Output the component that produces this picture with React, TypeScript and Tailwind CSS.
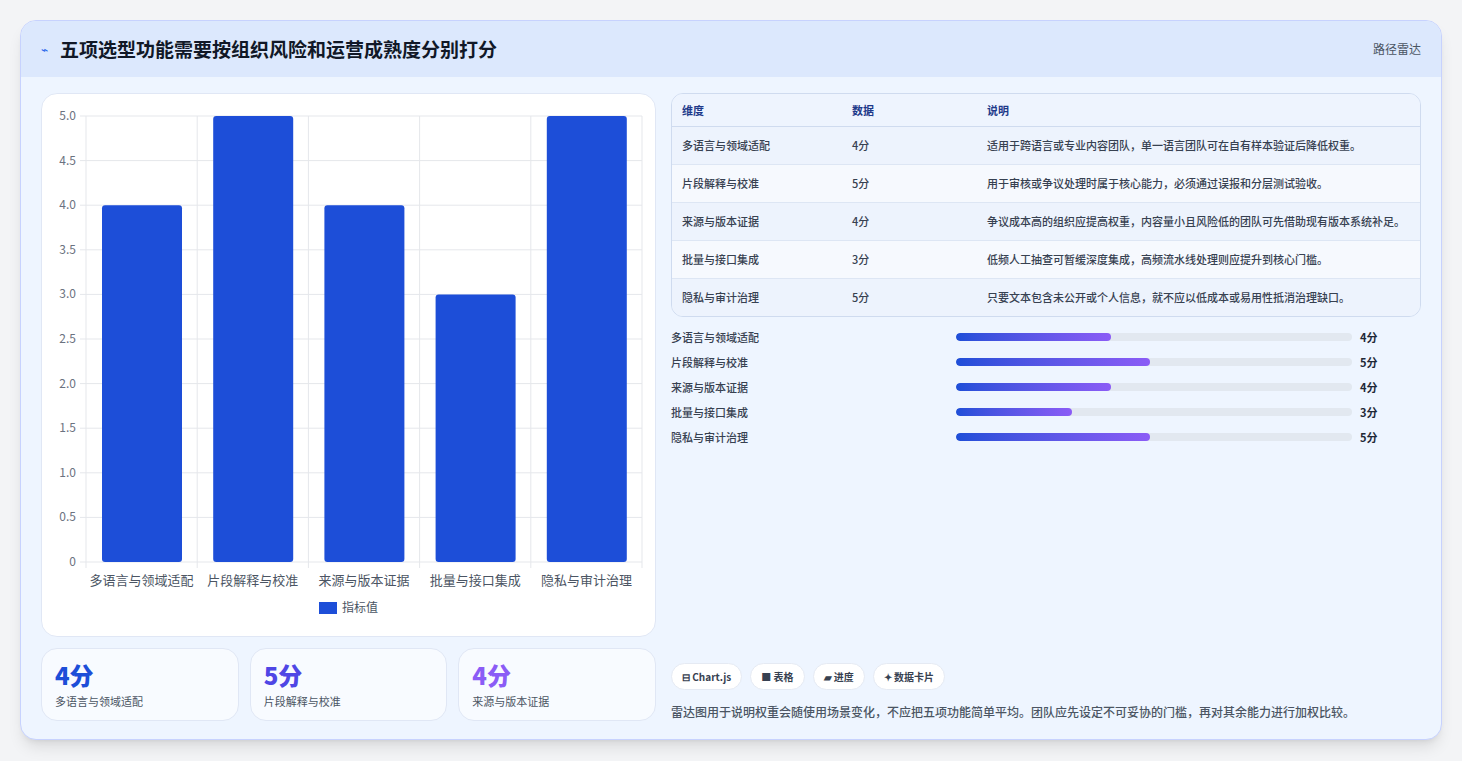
import React from 'react';

const rows = [
  { name: '多语言与领域适配', score: 4, note: '适用于跨语言或专业内容团队，单一语言团队可在自有样本验证后降低权重。' },
  { name: '片段解释与校准', score: 5, note: '用于审核或争议处理时属于核心能力，必须通过误报和分层测试验收。' },
  { name: '来源与版本证据', score: 4, note: '争议成本高的组织应提高权重，内容量小且风险低的团队可先借助现有版本系统补足。' },
  { name: '批量与接口集成', score: 3, note: '低频人工抽查可暂缓深度集成，高频流水线处理则应提升到核心门槛。' },
  { name: '隐私与审计治理', score: 5, note: '只要文本包含未公开或个人信息，就不应以低成本或易用性抵消治理缺口。' },
];

const font = { fontFamily: '"Noto Sans CJK SC", "Noto Sans", sans-serif' };

function BarChart() {
  const x0 = 44, x1 = 600, y0 = 22, y1 = 468;
  const h = y1 - y0;
  const cw = (x1 - x0) / 5;
  const ticks = [0, 0.5, 1, 1.5, 2, 2.5, 3, 3.5, 4, 4.5, 5];
  return (
    <svg width="615" height="544" className="block" style={font}>
      {ticks.map((t) => {
        const y = y1 - (t / 5) * h;
        return (
          <g key={t}>
            <line x1={x0 - 6} x2={x1} y1={y} y2={y} stroke="#e5e7eb" />
            <text x={x0 - 10} y={y + 4} textAnchor="end" fontSize="12" fill="#6b7280">
              {t === 0 ? '0' : t.toFixed(1)}
            </text>
          </g>
        );
      })}
      {[0, 1, 2, 3, 4, 5].map((i) => (
        <line key={i} x1={x0 + i * cw} x2={x0 + i * cw} y1={y0} y2={y1 + 6} stroke="#e5e7eb" />
      ))}
      {rows.map((r, i) => {
        const bh = (r.score / 5) * h;
        return (
          <g key={r.name}>
            <rect x={x0 + i * cw + 16} y={y1 - bh} width={80} height={bh} rx="3" fill="#1d4ed8" />
            <text x={x0 + i * cw + cw / 2} y={y1 + 23} textAnchor="middle" fontSize="13" fill="#4b5563">
              {r.name}
            </text>
          </g>
        );
      })}
      <rect x="277" y="508" width="18" height="12" fill="#1d4ed8" />
      <text x="300" y="518" fontSize="12" fill="#4b5563">指标值</text>
    </svg>
  );
}

export default function App() {
  return (
    <div className="min-h-[761px] bg-[#f3f4f6] pt-5 px-5" style={font}>
      <div className="w-[1422px] h-[720px] rounded-2xl border border-[#c7d2fe] bg-[#eef5ff] shadow-lg overflow-hidden flex flex-col">
        <div className="h-[56px] bg-[#dce8fd] flex items-center justify-between px-5 shrink-0">
          <div className="flex items-center gap-3">
            <span className="text-[#2563eb] text-xs">⌁</span>
            <h1 className="text-[19px] font-bold text-[#111827]">五项选型功能需要按组织风险和运营成熟度分别打分</h1>
          </div>
          <span className="text-xs text-[#4b5563]">路径雷达</span>
        </div>
        <div className="flex gap-[15px] px-5 pt-4 pb-[18px] flex-1">
          <div className="w-[615px] flex flex-col gap-[11px]">
            <div className="bg-white rounded-2xl border border-[#e0e7f5] h-[544px] overflow-hidden">
              <BarChart />
            </div>
            <div className="grid grid-cols-3 gap-[11px]">
              {[
                { v: '4分', c: 'text-[#1d4ed8]', l: '多语言与领域适配' },
                { v: '5分', c: 'text-[#4f46e5]', l: '片段解释与校准' },
                { v: '4分', c: 'text-[#8b5cf6]', l: '来源与版本证据' },
              ].map((s) => (
                <div key={s.l} className="h-[73px] rounded-2xl border border-[#e0e7f5] bg-[#f8fbff] px-[13px] pt-[10px]">
                  <div className={`text-[24px] font-extrabold leading-8 ${s.c}`}>{s.v}</div>
                  <div className="text-[11px] text-[#4b5563] mt-[2px]">{s.l}</div>
                </div>
              ))}
            </div>
          </div>
          <div className="flex-1 flex flex-col justify-between">
            <div>
              <div className="rounded-xl border border-[#cfdbef] overflow-hidden text-[11px]">
                <div className="flex h-[33px] items-center bg-[#eef4fe] border-b border-[#cfdbef] font-semibold text-[#1e3a8a]">
                  <div className="w-[180px] pl-[10px]">维度</div>
                  <div className="w-[135px]">数据</div>
                  <div className="flex-1">说明</div>
                </div>
                {rows.map((r, i) => (
                  <div
                    key={r.name}
                    className={`flex py-[10px] font-medium text-[#374151] leading-[17px] ${i % 2 === 0 ? 'bg-[#edf3fd]' : 'bg-[#f6f9fe]'} ${i < 4 ? 'border-b border-[#dde6f4]' : ''}`}
                  >
                    <div className="w-[180px] pl-[10px]">{r.name}</div>
                    <div className="w-[135px]">{r.score}分</div>
                    <div className="flex-1 pr-3">{r.note}</div>
                  </div>
                ))}
              </div>
              <div className="mt-[11px] flex flex-col gap-[7px]">
                {rows.map((r) => (
                  <div key={r.name} className="flex items-center h-[18px] text-[11px] font-medium text-[#374151]">
                    <div className="w-[285px]">{r.name}</div>
                    <div className="w-[396px] h-2 rounded-full bg-[#e2e8f0] overflow-hidden">
                      <div
                        className="h-full rounded-full bg-gradient-to-r from-[#1d4ed8] to-[#8b5cf6]"
                        style={{ width: `${(r.score / 5) * 49}%` }}
                      />
                    </div>
                    <div className="ml-2 font-bold text-[#1f2937]">{r.score}分</div>
                  </div>
                ))}
              </div>
            </div>
            <div>
              <div className="flex gap-2 text-[10px] font-semibold text-[#374151]">
                {['⊟ Chart.js', '■ 表格', '▰ 进度', '✦ 数据卡片'].map((c) => (
                  <span key={c} className="h-[27px] px-[10px] flex items-center rounded-full bg-white border border-[#e5eaf3]">
                    {c}
                  </span>
                ))}
              </div>
              <p className="mt-[13px] text-[12px] font-medium text-[#4b5563]">
                雷达图用于说明权重会随使用场景变化，不应把五项功能简单平均。团队应先设定不可妥协的门槛，再对其余能力进行加权比较。
              </p>
            </div>
          </div>
        </div>
      </div>
    </div>
  );
}
